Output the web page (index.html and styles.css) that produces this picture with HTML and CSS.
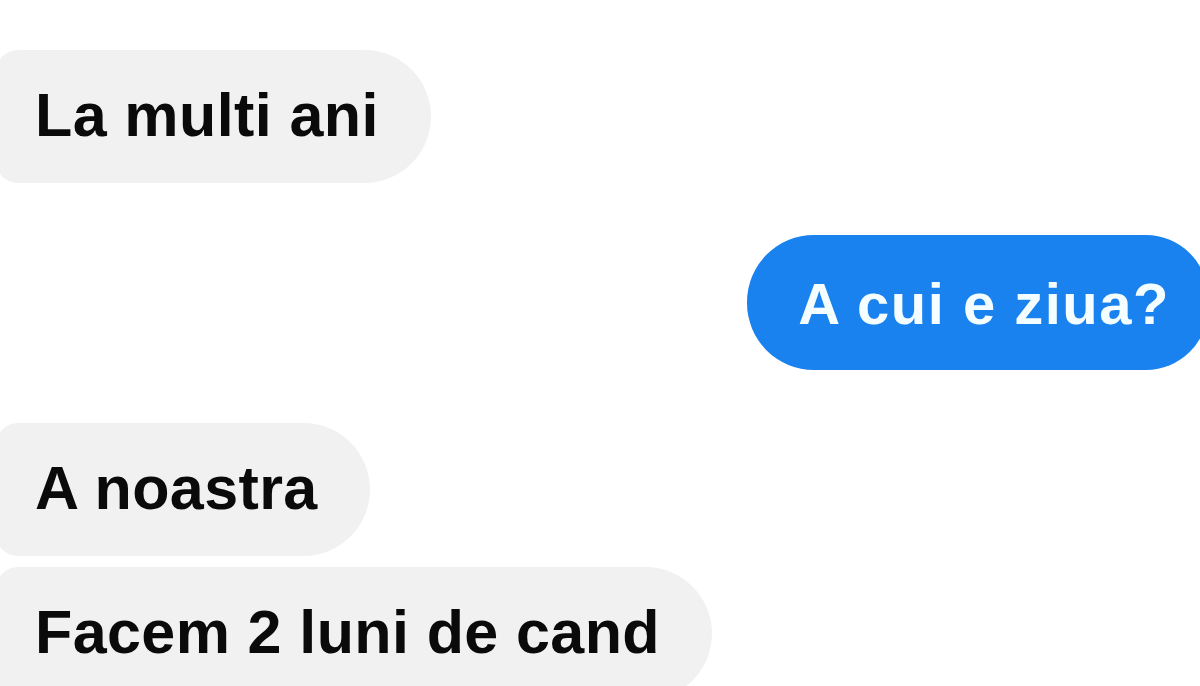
FILE: index.html
```html
<!DOCTYPE html>
<html lang="ro">
<head>
<meta charset="utf-8">
<title>Chat</title>
<link rel="stylesheet" href="styles.css">
</head>
<body>
<div class="chat">
  <div class="bubble in first">La multi ani</div>
  <div class="bubble out">A cui e ziua?</div>
  <div class="bubble in third">A noastra</div>
  <div class="bubble in fourth">Facem 2 luni de cand</div>
</div>
</body>
</html>
```
FILE: styles.css
```css
html, body {
  margin: 0;
  padding: 0;
  background: #ffffff;
  overflow: hidden;
}
.chat {
  width: 1200px;
  height: 686px;
  display: flex;
  flex-direction: column;
  align-items: flex-start;
  font-family: "Liberation Sans", Arial, sans-serif;
  font-weight: bold;
}
.bubble {
  font-size: 61px;
  line-height: 70px;
  white-space: nowrap;
  box-sizing: border-box;
}
.in {
  background: #f1f1f1;
  color: #0a0a0a;
  height: 133px;
  padding: 30px 52px 33px 39px;
  margin-left: -4px;
  letter-spacing: 0.4px;
  border-radius: 22px 67px 67px 22px;
}
.first {
  margin-top: 50px;
}
.out {
  align-self: flex-end;
  margin-top: 52px;
  margin-right: -8px;
  height: 135px;
  padding: 34px 38px 31px 51px;
  font-size: 58px;
  letter-spacing: 1.5px;
  background: #1a82ee;
  color: #f4fdff;
  border-radius: 67px 62px 62px 67px;
}
.third {
  margin-top: 53px;
}
.fourth {
  margin-top: 11px;
}
```
